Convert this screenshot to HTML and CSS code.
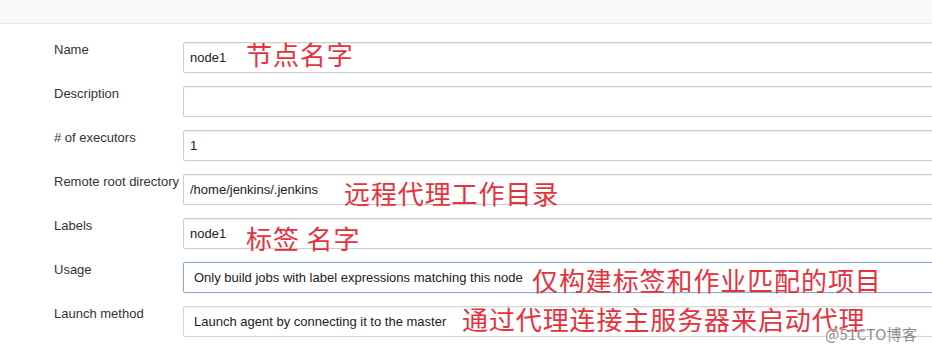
FILE: index.html
```html
<!DOCTYPE html>
<html lang="zh-CN">
<head>
    <meta charset="UTF-8">
    <title>Configure node</title>
    <link rel="stylesheet" href="styles.css">
</head>
<body>
    <div class="topbar"></div>

    <div class="form">
        <div class="row">
            <label class="label" for="name">Name</label>
            <div class="field">
                <input type="text" id="name" value="node1">
                <span class="note note-name">节点名字</span>
            </div>
        </div>
        <div class="row">
            <label class="label" for="description">Description</label>
            <div class="field">
                <input type="text" id="description" value="">
            </div>
        </div>
        <div class="row">
            <label class="label" for="executors"># of executors</label>
            <div class="field">
                <input type="text" id="executors" value="1">
            </div>
        </div>
        <div class="row">
            <label class="label" for="remoteFs">Remote root directory</label>
            <div class="field">
                <input type="text" id="remoteFs" value="/home/jenkins/.jenkins">
                <span class="note note-remote">远程代理工作目录</span>
            </div>
        </div>
        <div class="row">
            <label class="label" for="labels">Labels</label>
            <div class="field">
                <input type="text" id="labels" value="node1">
                <span class="note note-labels">标签 名字</span>
            </div>
        </div>
        <div class="row">
            <label class="label" for="usage">Usage</label>
            <div class="field">
                <div class="select select-focus" id="usage">Only build jobs with label expressions matching this node</div>
                <span class="note note-usage">仅构建标签和作业匹配的项目</span>
            </div>
        </div>
        <div class="row">
            <label class="label" for="launcher">Launch method</label>
            <div class="field">
                <div class="select" id="launcher">Launch agent by connecting it to the master</div>
                <span class="note note-launch">通过代理连接主服务器来启动代理</span>
            </div>
        </div>
    </div>

    <div class="watermark">@51CTO博客</div>
</body>
</html>
```

FILE: styles.css
```css
html, body {
    margin: 0;
    padding: 0;
    background-color: #fff;
    overflow: hidden;
}

body {
    font-family: "Liberation Sans", Arial, sans-serif;
    font-size: 13px;
    color: #333;
    position: relative;
    height: 352px;
}

.topbar {
    height: 23px;
    background-color: #f8f8f8;
    border-bottom: 1px solid #e7e7e7;
}

.form {
    padding: 18px 0 0 54px;
    display: flex;
    flex-direction: column;
    gap: 13px;
    margin-right: -40px;
}

.row {
    display: grid;
    grid-template-columns: 129px 1fr;
}

.label {
    line-height: 16px;
    color: #333;
    white-space: nowrap;
}

.field {
    position: relative;
}

input[type="text"], .select {
    display: block;
    width: 100%;
    height: 31px;
    box-sizing: border-box;
    margin: 0;
    border: 1px solid #ccc;
    border-radius: 2px;
    font-family: "Liberation Sans", Arial, sans-serif;
    font-size: 13px;
    color: #222;
    background-color: #fff;
    box-shadow: inset 0 1px 1px rgba(0, 0, 0, 0.06);
}

input[type="text"] {
    padding: 0 6px;
}

.select {
    padding: 0 10px;
    line-height: 29px;
    white-space: nowrap;
    border-color: #d6d6d6;
}

.select-focus {
    border-color: #8ea9cf;
    box-shadow: 0 0 2px rgba(102, 140, 200, 0.35);
}

.note {
    position: absolute;
    font-family: "Noto Sans CJK SC", "Microsoft YaHei", sans-serif;
    font-size: 26px;
    line-height: 26px;
    letter-spacing: 0.9px;
    color: #e6323c;
    white-space: nowrap;
}

.note-name { left: 63px; top: -1px; }
.note-remote { left: 161px; top: 6px; }
.note-labels { left: 63px; top: 7px; }
.note-usage { left: 349px; top: 5px; }
.note-launch { left: 279px; top: 0; }

.watermark {
    position: absolute;
    left: 825px;
    top: 325px;
    font-family: "Noto Sans CJK SC", sans-serif;
    font-size: 15px;
    line-height: 17px;
    letter-spacing: 0.3px;
    color: #8a8a8a;
    text-shadow: 0 0 2px #fff, 0 0 2px #fff;
}
```
